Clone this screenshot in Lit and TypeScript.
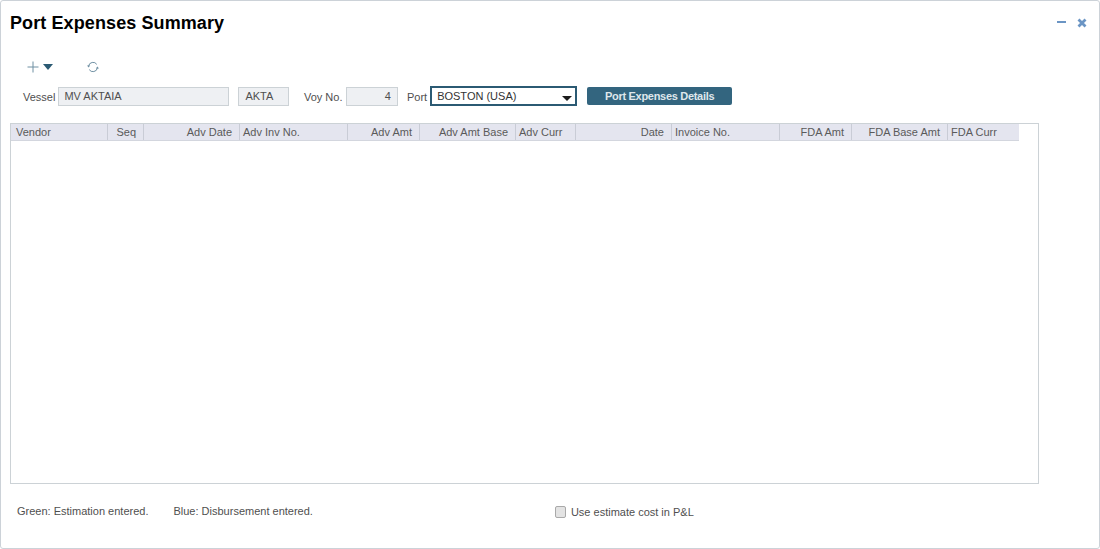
import { LitElement, html, css } from "lit";
import { customElement } from "lit/decorators.js";

const cols: [string, number, string][] = [
  ["Vendor", 97, "l"], ["Seq", 36, "r"], ["Adv Date", 96, "r"], ["Adv Inv No.", 108, "l2"],
  ["Adv Amt", 72, "r"], ["Adv Amt Base", 96, "r"], ["Adv Curr", 60, "l2"], ["Date", 96, "r"],
  ["Invoice No.", 108, "l2"], ["FDA Amt", 72, "r"], ["FDA Base Amt", 96, "r"], ["FDA Curr", 71, "l2"],
];

@customElement("app-root")
export class AppRoot extends LitElement {
  static styles = css`
    :host { display: block; font-family: "Liberation Sans", Arial, sans-serif; color: #4f4f4f; font-size: 11px; }
    * { box-sizing: border-box; }
    .panel { width: 1100px; height: 549px; border: 1px solid #ccd2d8; border-radius: 3px; background: #fff; padding: 0 0 0 9px; display: flex; flex-direction: column; }
    .head { height: 45px; display: flex; align-items: flex-start; justify-content: space-between; padding-right: 12px; }
    h1 { margin: 12px 0 0; font-size: 18px; line-height: 20px; font-weight: 700; color: #000; letter-spacing: 0.1px; }
    .win { display: flex; align-items: center; gap: 10px; margin-top: 16px; }
    .tools { height: 32px; display: flex; align-items: center; padding: 10px 0 0 17px; }
    .tools svg { display: block; }
    .refresh { margin-left: 33px; }
    .form { height: 20px; margin-top: 8px; display: flex; align-items: center; padding-left: 13px; font-size: 11px; line-height: 15px; }
    .form > span { padding-top: 2px; }
    .box { height: 19px; background: #eef0f3; border: 1px solid #ccd2d6; padding: 0 5px; line-height: 16px; color: #4f4f4f; }
    .vessel { width: 171px; margin-left: 3px; }
    .code { width: 51px; margin-left: 9px; padding-left: 6px; }
    .voy-l { margin-left: 14.5px; }
    .voy { width: 52px; margin-left: 3.5px; text-align: right; padding-right: 6px; }
    .port-l { margin-left: 9px; }
    .sel { width: 147px; height: 20px; margin-left: 3px; border: 2px solid #2b5a73; padding: 0 0 0 5px; line-height: 14px; color: #333; display: flex; justify-content: space-between; align-items: center; background: #fff; }
    .caret { width: 0; height: 0; border: 5.5px solid transparent; border-top: 5px solid #1c1c1c; border-bottom: 0; margin: 4px 3px 0 0; }
    .btn { width: 145px; height: 18px; margin-left: 10px; background: #33657f; color: #dfe7ec; border-radius: 2px; font-weight: 700; font-size: 11px; letter-spacing: -0.3px; display: flex; align-items: center; justify-content: center; }
    .grid { width: 1029px; height: 361px; margin-top: 17px; border: 1px solid #ccd2d6; }
    .hrow { display: flex; width: 1008px; height: 17px; background: #e4e5ef; border-bottom: 1px solid #d3d6de; }
    .c { border-right: 1px solid #c9ccd6; line-height: 16px; padding: 0 7px 0 5px; white-space: nowrap; color: #5a5a5a; }
    .c:last-child { border-right: 0; }
    .r { text-align: right; }
    .l2 { padding-left: 3px; }
    .foot { flex: 1; display: flex; padding: 21px 0 0 7px; color: #4f4f4f; }
    .blue { margin-left: 25px; }
    .chk { display: flex; align-items: center; gap: 5px; margin-left: 242px; height: 13px; }
    .cb { width: 11px; height: 12px; background: #e3e3e3; border: 1px solid #a9a9a9; border-radius: 2px; }
  `;

  render() {
    return html`<div class="panel">
      <div class="head">
        <h1>Port Expenses Summary</h1>
        <div class="win">
          <svg width="10" height="12" viewBox="0 0 10 12"><path d="M0 5h9" stroke="#6b95c4" stroke-width="2"/></svg>
          <svg width="10" height="10" viewBox="0 0 10 10"><path d="M1.5 1.5l7 7M8.5 1.5l-7 7" stroke="#6b95c4" stroke-width="2.8"/></svg>
        </div>
      </div>
      <div class="tools">
        <svg width="27" height="12" viewBox="0 0 27 12"><path d="M6 .5v11M.5 6h11" stroke="#6f90a3" stroke-width="1"/><path d="M16 3h10l-5 6z" fill="#2b5a73"/></svg>
        <svg class="refresh" width="12" height="12" viewBox="0 0 12 12" fill="none" stroke="#6f90a3" stroke-width="1"><path d="M1.6 5A4.5 4.5 0 0 1 9.8 3.4M10.4 7A4.5 4.5 0 0 1 2.2 8.6"/><path d="M0 4.4h3.2L1.6 6.4zM12 7.6H8.8l1.6-2z" fill="#6f90a3" stroke="none"/></svg>
      </div>
      <div class="form">
        <span>Vessel</span><div class="box vessel">MV AKTAIA</div>
        <div class="box code">AKTA</div>
        <span class="voy-l">Voy No.</span><div class="box voy">4</div>
        <span class="port-l">Port</span>
        <div class="sel"><span>BOSTON (USA)</span><i class="caret"></i></div>
        <div class="btn">Port Expenses Details</div>
      </div>
      <div class="grid">
        <div class="hrow">${cols.map(([t, w, k]) => html`<div class="c ${k}" style="width:${w}px">${t}</div>`)}</div>
      </div>
      <div class="foot">
        <span>Green: Estimation entered.</span>
        <span class="blue">Blue: Disbursement entered.</span>
        <label class="chk"><span class="cb"></span><span>Use estimate cost in P&amp;L</span></label>
      </div>
    </div>`;
  }
}
